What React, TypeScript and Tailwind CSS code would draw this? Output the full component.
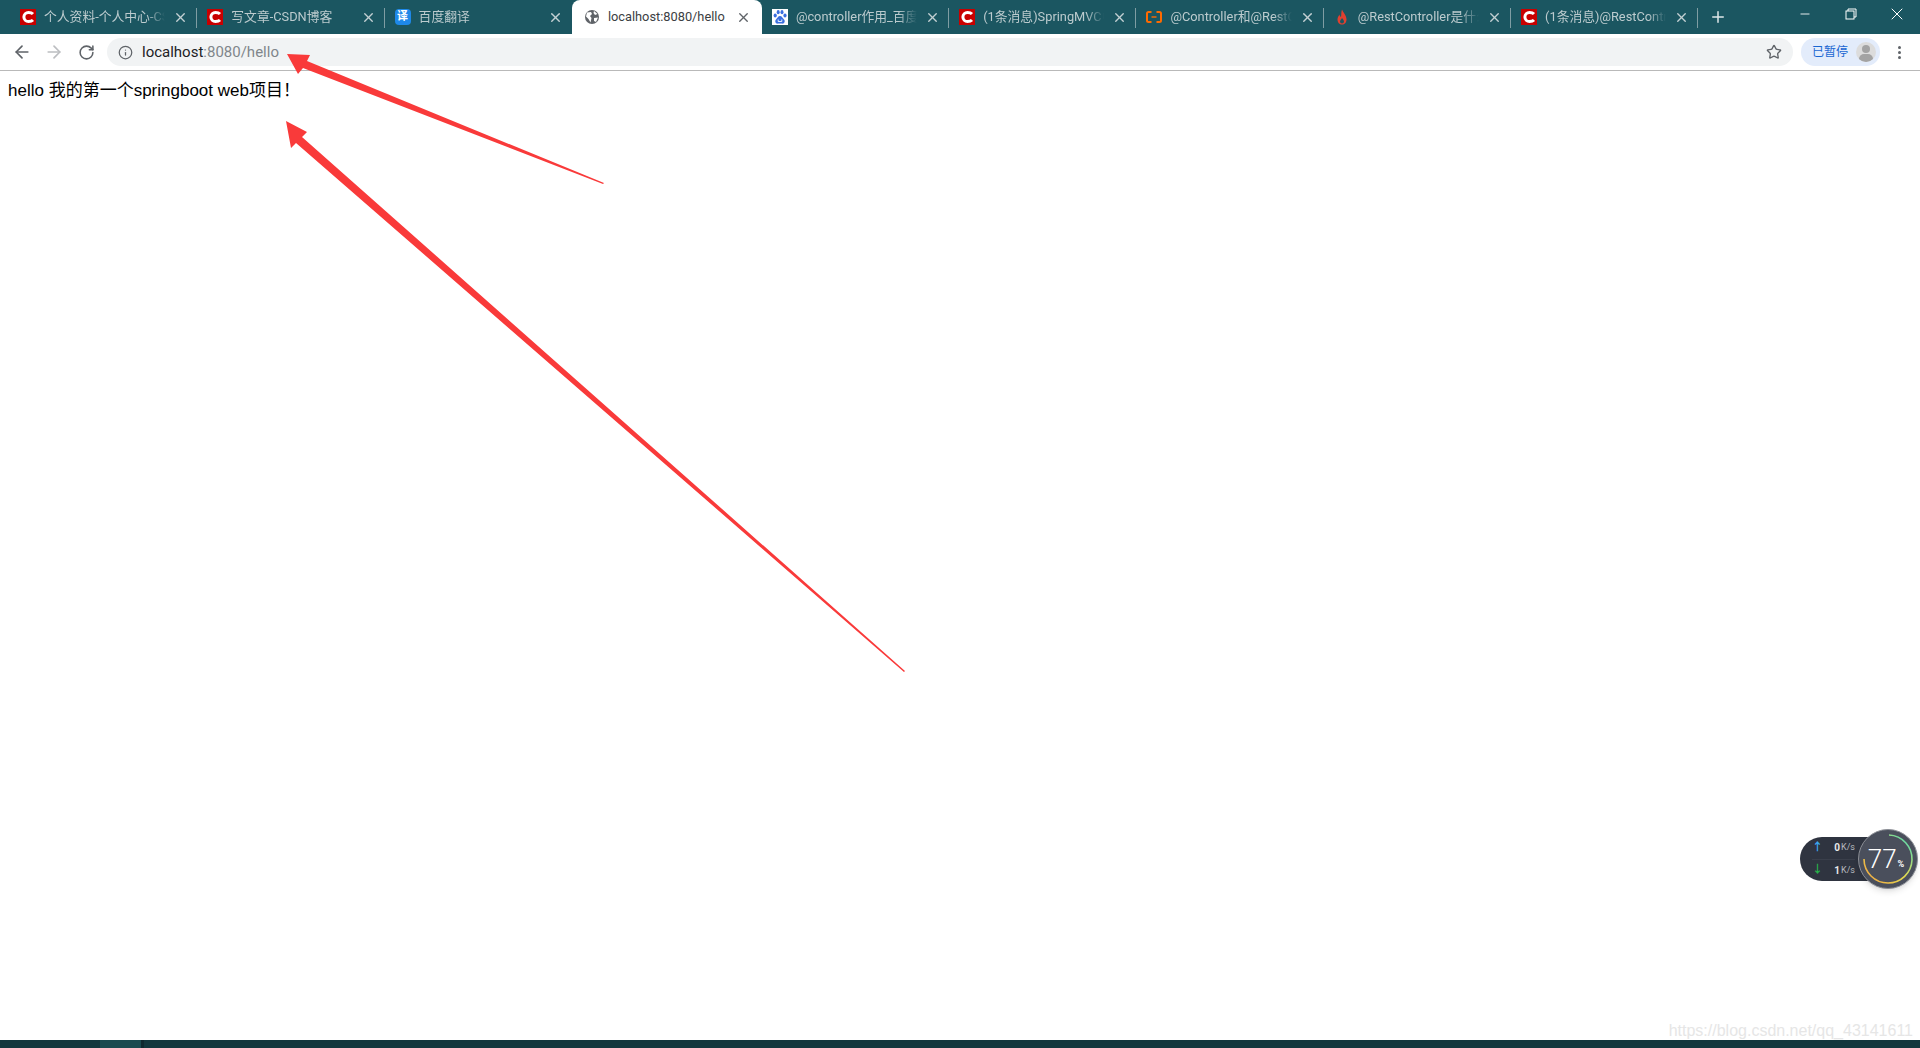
import React from 'react';
import { ArrowLeft, ArrowRight, RotateCw, Info, Star, Plus, X, Minus } from 'lucide-react';

type Fav = 'csdn' | 'fanyi' | 'globe' | 'baidu' | 'ali' | 'fire';

interface TabInfo {
  title: string;
  fav: Fav;
  active?: boolean;
}

const TABS: TabInfo[] = [
  { title: '个人资料-个人中心-CSDN博客', fav: 'csdn' },
  { title: '写文章-CSDN博客', fav: 'csdn' },
  { title: '百度翻译', fav: 'fanyi' },
  { title: 'localhost:8080/hello', fav: 'globe', active: true },
  { title: '@controller作用_百度搜索', fav: 'baidu' },
  { title: '(1条消息)SpringMVC中的注解', fav: 'csdn' },
  { title: '@Controller和@RestController', fav: 'ali' },
  { title: '@RestController是什么意思', fav: 'fire' },
  { title: '(1条消息)@RestController注解', fav: 'csdn' },
];

const Favicon: React.FC<{ fav: Fav }> = ({ fav }) => {
  if (fav === 'csdn') {
    return (
      <svg width="16" height="16" viewBox="0 0 16 16" className="shrink-0">
        <rect width="16" height="16" fill="#c90000" />
        <path d="M13 5 Q11.5 3.4 8.5 3.4 A4.6 4.6 0 0 0 8.5 12.6 Q11.5 12.6 13 11" fill="none" stroke="#fff" strokeWidth="3" />
      </svg>
    );
  }
  if (fav === 'fanyi') {
    return (
      <div className="w-4 h-4 shrink-0 rounded-sm bg-[#1e88e8] text-white text-[11px] leading-4 text-center font-bold">译</div>
    );
  }
  if (fav === 'globe') {
    return (
      <svg width="16" height="16" viewBox="0 0 16 16" className="shrink-0">
        <circle cx="8" cy="8" r="7" fill="#5f6368" />
        <path d="M3 3.5 L7 3 L8 5 L6 7 L7.5 9 L6.5 13.5 L4.5 10 L2 7.5 Z M10 2 L13.5 5 L11 6 L9.5 4 Z M10 9 L14 8.5 L12 13 L10 12 Z" fill="#fff" />
      </svg>
    );
  }
  if (fav === 'baidu') {
    return (
      <svg width="16" height="16" viewBox="0 0 16 16" className="shrink-0">
        <rect width="16" height="16" fill="#fff" />
        <g fill="#3a6fe0">
          <ellipse cx="3.2" cy="6.6" rx="1.6" ry="2" />
          <ellipse cx="6.2" cy="3.2" rx="1.5" ry="2.1" />
          <ellipse cx="10" cy="3.2" rx="1.5" ry="2.1" />
          <ellipse cx="13" cy="6.6" rx="1.6" ry="2" />
          <path d="M8 7 C6 7 5.5 9 4 10.5 C2.5 12 3.5 15 6 14.6 C7.5 14.3 8.5 14.3 10 14.6 C12.5 15 13.5 12 12 10.5 C10.5 9 10 7 8 7 Z" />
        </g>
        <path d="M6.2 10.5 V12.5 H9.8 V10.5" fill="none" stroke="#fff" strokeWidth="0.9" />
      </svg>
    );
  }
  if (fav === 'ali') {
    return (
      <svg width="16" height="16" viewBox="0 0 16 16" className="shrink-0">
        <path d="M5.5 3 H2.5 Q1 3 1 4.5 V11.5 Q1 13 2.5 13 H5.5 M10.5 3 H13.5 Q15 3 15 4.5 V11.5 Q15 13 13.5 13 H10.5" fill="none" stroke="#ff6a00" strokeWidth="2" />
        <rect x="5.5" y="7.3" width="5" height="1.4" fill="#ff6a00" />
      </svg>
    );
  }
  return (
    <svg width="16" height="16" viewBox="0 0 16 16" className="shrink-0">
      <path d="M8 0.5 C9 3.5 12.5 6 12.5 10.5 C12.5 13.5 10.5 15.5 8 15.5 C5.5 15.5 3.5 13.5 3.5 10.5 C3.5 8.5 4.5 7 5.5 5.5 C5.8 7 6.2 7.5 7 8 C7.5 5.5 7 3 8 0.5 Z" fill="#e0402f" />
      <path d="M8 9 C9 10.5 10 11.2 10 12.6 C10 13.8 9 14.5 8 14.5 C7 14.5 6 13.8 6 12.6 C6 11.2 7.4 10.5 8 9 Z" fill="#1b5661" />
    </svg>
  );
};

const Tab: React.FC<{ tab: TabInfo; hideSep: boolean }> = ({ tab, hideSep }) => {
  if (tab.active) {
    return (
      <div className="relative w-[190px] h-[34px] shrink-0 bg-white rounded-t-[8px] flex items-center pl-[12px] pr-[11px] gap-[8px]">
        <Favicon fav={tab.fav} />
        <span className="flex-1 truncate text-[12.8px] text-[#3c4043]">{tab.title}</span>
        <X size={15} strokeWidth={2.2} className="text-[#5f6368] shrink-0" />
      </div>
    );
  }
  return (
    <div className="relative w-[187.3px] h-[34px] shrink-0 flex items-center pl-[10px] pr-[9px] gap-[8px]">
      <Favicon fav={tab.fav} />
      <span className="flex-1 whitespace-nowrap overflow-hidden text-[12.8px] text-[#bccbce] [mask-image:linear-gradient(to_right,black_85%,transparent)]">
        {tab.title}
      </span>
      <X size={15} strokeWidth={2.2} className="text-[#c3d0d3] shrink-0" />
      {!hideSep && <div className="absolute right-0 top-[8px] w-px h-[20px] bg-[#7f9da3]" />}
    </div>
  );
};

const SpeedWidget: React.FC = () => (
  <div className="absolute right-[2px] top-[828px] w-[118px] h-[62px] flex items-center">
    <div className="w-[86px] h-[44px] shrink-0 rounded-l-[22px] bg-[#2f3440] flex flex-col text-[#e8e8e8] text-[9px] pl-[12px] pr-[31px]">
      <div className="flex-1 flex items-center border-b border-[#3a3f4b]">
        <span className="text-[#3ba7f0] text-[11px] font-bold">↑</span>
        <span className="ml-auto text-[10px] font-bold">0</span>
        <span className="ml-[1px] text-[#b6b9bf]">K/s</span>
      </div>
      <div className="flex-1 flex items-center">
        <span className="text-[#27b14a] text-[11px] font-bold">↓</span>
        <span className="ml-auto text-[10px] font-bold">1</span>
        <span className="ml-[1px] text-[#b6b9bf]">K/s</span>
      </div>
    </div>
    <div className="relative -ml-[28px] w-[60px] h-[60px] shrink-0 rounded-full bg-[#4a4f5c] border border-[#8c8f96] shadow-md flex items-center justify-center text-white">
      <svg width="58" height="58" viewBox="0 0 58 58" className="absolute inset-0">
        <defs>
          <linearGradient id="ring" x1="0" y1="1" x2="1" y2="0">
            <stop offset="0" stopColor="#f0a040" />
            <stop offset="0.5" stopColor="#e4dc50" />
            <stop offset="1" stopColor="#3fd8c0" />
          </linearGradient>
        </defs>
        <path d="M30 5 A24 24 0 0 1 53 30 A24 24 0 0 1 29 53 A24 24 0 0 1 5 29" fill="none" stroke="url(#ring)" strokeWidth="1.6" />
      </svg>
      <span className="relative text-[26px] font-light leading-none -ml-[4px]">77</span>
      <span className="relative text-[9px] font-bold mt-[12px] ml-[1px]">%</span>
    </div>
  </div>
);

const Arrows: React.FC = () => (
  <svg width="1920" height="1048" viewBox="0 0 1920 1048" className="absolute inset-0 pointer-events-none">
    <polygon points="287,54 310,55 307,61 604,183 603,184 303,68 298,74" fill="#f93a3a" />
    <polygon points="286,121 307,132 302,137 905,671 904,672 296,143 291,148" fill="#f93a3a" />
  </svg>
);

export default function App() {
  return (
    <div
      className="relative w-[1920px] h-[1048px] overflow-hidden flex flex-col bg-white"
      style={{ fontFamily: 'Roboto, "Noto Sans CJK SC", sans-serif' }}
    >
      {/* tab strip */}
      <div className="h-[34px] shrink-0 bg-[#1b5661] flex items-start pl-[10px]">
        {TABS.map((tab, i) => (
          <Tab key={i} tab={tab} hideSep={i === 2 || i === 3} />
        ))}
        <Plus size={18} strokeWidth={2} className="text-[#dfe7e9] ml-[11px] mt-[8px] shrink-0" />
        <div className="ml-auto flex items-center text-white h-[28px]">
          <div className="w-[46px] flex justify-center"><Minus size={14} strokeWidth={1.5} /></div>
          <div className="w-[46px] flex justify-center">
            <svg width="12" height="12" viewBox="0 0 12 12" fill="none" stroke="currentColor" strokeWidth="1">
              <rect x="1" y="3" width="8" height="8" />
              <path d="M3 3 V1 H11 V9 H9" />
            </svg>
          </div>
          <div className="w-[46px] flex justify-center"><X size={20} strokeWidth={1.2} /></div>
        </div>
      </div>

      {/* toolbar */}
      <div className="h-[37px] shrink-0 bg-white border-b border-[#b9b9b9] flex items-center pl-[12px] pr-[19px]">
        <ArrowLeft size={20} strokeWidth={2} className="text-[#5f6368]" />
        <ArrowRight size={20} strokeWidth={2} className="text-[#bcbec1] ml-[12px]" />
        <RotateCw size={17} strokeWidth={2.2} className="text-[#5f6368] ml-[14px]" />
        <div className="ml-[12px] flex-1 h-[28px] rounded-full bg-[#f1f3f4] flex items-center pl-[11px] pr-[11px]">
          <Info size={15} strokeWidth={2} className="text-[#5f6368]" />
          <span className="ml-[9px] text-[15px] text-[#202124]">
            localhost<span className="text-[#80868b]">:8080/hello</span>
          </span>
          <Star size={16} strokeWidth={2} className="ml-auto text-[#5f6368]" />
        </div>
        <div className="ml-[8px] w-[79px] h-[28px] rounded-full bg-[#e3ecfb] flex items-center pl-[11px] pr-[4px]">
          <span className="text-[12px] text-[#1a66d2]">已暂停</span>
          <div className="relative ml-auto w-[20px] h-[20px] rounded-full bg-[#dcdcdc] overflow-hidden">
            <div className="absolute left-[6px] top-[3px] w-[8px] h-[8px] rounded-full bg-[#a3a3a3]" />
            <div className="absolute left-[3px] top-[12px] w-[14px] h-[10px] rounded-full bg-[#a3a3a3]" />
          </div>
        </div>
        <div className="ml-[18px] flex flex-col gap-[2px]">
          <div className="w-[3px] h-[3px] rounded-full bg-[#5f6368]" />
          <div className="w-[3px] h-[3px] rounded-full bg-[#5f6368]" />
          <div className="w-[3px] h-[3px] rounded-full bg-[#5f6368]" />
        </div>
      </div>

      {/* page */}
      <div className="flex-1 pt-[10px] pl-[8px]">
        <p className="text-[17px] leading-[20px] text-black" style={{ fontFamily: '"Liberation Sans", "Noto Sans CJK SC", sans-serif' }}>
          hello 我的第一个springboot web项目！
        </p>
      </div>

      {/* taskbar */}
      <div className="h-[8px] shrink-0 bg-[#12373d] flex">
        <div className="ml-[100px] w-[44px] bg-[#1a4b50] border-r-[3px] border-[#0f2a30]" />
      </div>

      <Arrows />
      <SpeedWidget />
      <div className="absolute right-[7px] top-[1021px] text-[16px] leading-[20px] text-[#e6e6e6]" style={{ fontFamily: '"Liberation Sans", sans-serif' }}>
        https://blog.csdn.net/qq_43141611
      </div>
    </div>
  );
}
